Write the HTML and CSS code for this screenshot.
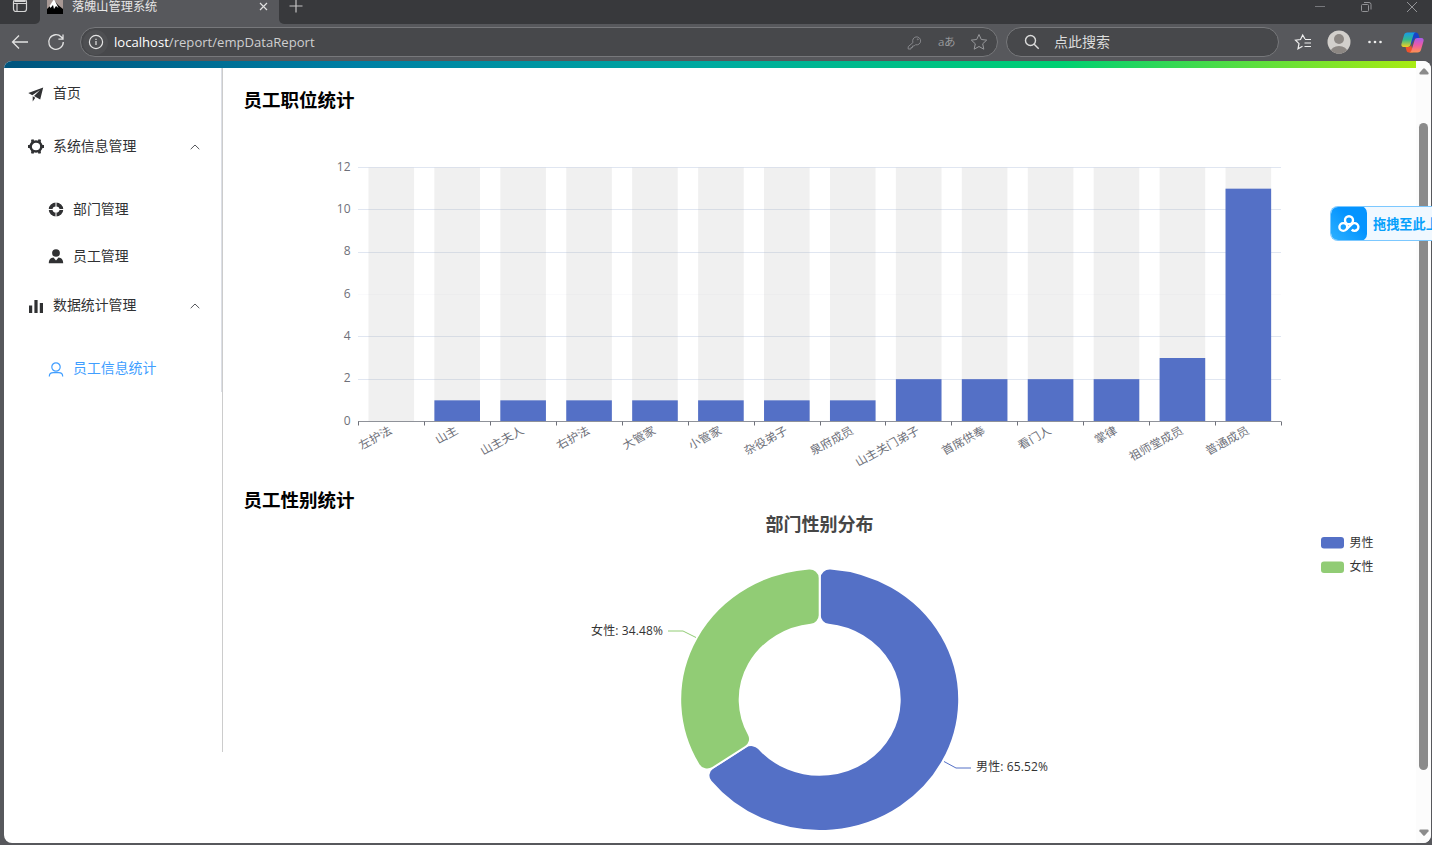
FILE: index.html
```html
<!DOCTYPE html>
<html lang="zh-CN">
<head>
    <meta charset="UTF-8">
    <meta name="viewport" content="width=device-width, initial-scale=1.0">
    <title>落魄山管理系统</title>
    <link rel="stylesheet" href="styles.css">
</head>
<body>
    <div class="tab-bar">
        <div class="tab-actions">
            <svg width="16" height="16" viewBox="0 0 16 16" fill="none" stroke="#d4d4d4" stroke-width="1.2"><rect x="1.5" y="1.5" width="13" height="12" rx="2.5"/><path d="M1.5 5.5h13M5 5.5v8"/><path d="M2.5 3h11" stroke-width="2"/></svg>
        </div>
        <div class="tab">
            <svg class="favicon" width="16" height="16" viewBox="0 0 16 16"><rect width="16" height="16" fill="#a79894"/><path d="M0 11l3-3 4-6 4 5 5 4v5H0z" fill="#000"/><path d="M7 1L2.500 8l1 2 2.500-3 1 4 2-3 2.500 2z" fill="#fff"/></svg>
            <span class="tab-title">落魄山管理系统</span>
            <svg class="tab-close" width="9" height="9" viewBox="0 0 9 9" stroke="#e0e0e0" stroke-width="1.2"><path d="M1 1l7 7M8 1L1 8"/></svg>
        </div>
        <div class="tab-rest">
            <svg width="14" height="14" viewBox="0 0 14 14" stroke="#c4c4c4" stroke-width="1.2"><path d="M7 .5v13M.5 7h13"/></svg>
            <div class="window-controls">
                <svg width="12" height="12" viewBox="0 0 12 12" stroke="#77787c"><path d="M1 5.500h10"/></svg>
                <svg width="12" height="12" viewBox="0 0 12 12" fill="none" stroke="#929396"><rect x="1.500" y="3.500" width="7" height="7" rx="1"/><path d="M4 1.500h5a2 2 0 0 1 2 2v5"/></svg>
                <svg width="12" height="12" viewBox="0 0 12 12" stroke="#929396"><path d="M1 1l10 10M11 1L1 11"/></svg>
            </div>
        </div>
    </div>

    <div class="toolbar">
        <svg class="back" width="18" height="16" viewBox="0 0 18 16" fill="none" stroke="#e2e2e2" stroke-width="1.3"><path d="M17 8H1.500M8 1.500L1.500 8 8 14.500"/></svg>
        <svg class="refresh" width="18" height="18" viewBox="0 0 18 18" fill="none" stroke="#e2e2e2" stroke-width="1.3"><path d="M16.300 9a7.300 7.300 0 1 1-2-5l1.700 1.800M16 1.500v4.600h-4.600"/></svg>
        <div class="address">
            <span class="info-badge"><svg width="16" height="16" viewBox="0 0 16 16" fill="none" stroke="#e4e4e4" stroke-width="1.2"><circle cx="8" cy="8" r="6.600"/><path d="M8 7v4M8 4.700v1.300"/></svg></span>
            <span class="url"><b>localhost</b>/report/empDataReport</span>
            <svg class="key" width="15" height="15" viewBox="0 0 15 15" fill="none" stroke="#85868a"><path d="M6 7.500a4 4 0 1 1 2.500 2.200L7.200 11H5.500v1.500H4V14H1.200v-2.300z"/><circle cx="10.800" cy="4.300" r=".5"/></svg>
            <span class="translate">aあ</span>
            <svg width="18" height="18" viewBox="0 0 18 18" fill="none" stroke="#98999c"><path d="M9 1.500l2.300 5 5.400.6-4 3.700 1.100 5.400L9 13.500l-4.800 2.700 1.100-5.400-4-3.700 5.400-.6z"/></svg>
        </div>
        <div class="search">
            <svg width="16" height="16" viewBox="0 0 16 16" fill="none" stroke="#dcdcdc" stroke-width="1.4"><circle cx="6.500" cy="6.500" r="5"/><path d="M10.200 10.200l4.500 4.500"/></svg>
            <span>点此搜索</span>
        </div>
        <svg class="favorites" width="18" height="18" viewBox="0 0 18 18" fill="none" stroke="#eee" stroke-width="1.2"><path d="M11 6L8.700 2 6.500 6.500l-5 .6L5 10.600 4 15.800l4.500-2.500M11 6.500h6M10.500 10H17M10.500 13.500H17"/></svg>
        <svg class="avatar" width="24" height="24" viewBox="0 0 24 24"><defs><clipPath id="face"><circle cx="12" cy="12" r="11.500"/></clipPath></defs><g clip-path="url(#face)"><rect width="24" height="24" fill="#d2cfcb"/><circle cx="12" cy="9" r="5" fill="#8c8783"/><ellipse cx="12" cy="22" rx="8.500" ry="6" fill="#8c8783"/></g></svg>
        <svg class="more" width="16" height="4" viewBox="0 0 16 4" fill="#eee"><circle cx="2.500" cy="2" r="1.300"/><circle cx="8" cy="2" r="1.300"/><circle cx="13.500" cy="2" r="1.300"/></svg>
        <svg class="copilot" width="23" height="21" viewBox="0 0 23 21">
            <defs>
                <linearGradient id="cp1" x1="0" y1="0" x2="0" y2="1"><stop offset="0" stop-color="#169bea"/><stop offset=".5" stop-color="#35b98b"/><stop offset="1" stop-color="#f5d020"/></linearGradient>
                <linearGradient id="cp2" x1="0" y1="0" x2="0" y2="1"><stop offset="0" stop-color="#a65bea"/><stop offset=".5" stop-color="#ee5ba5"/><stop offset="1" stop-color="#ff9350"/></linearGradient>
            </defs>
            <path d="M11 .5h4c1.500 0 2.200 1 2.600 2.300L18.500 6h-3c-1.500 0-2.300.8-2.700 2l-3 5z" fill="#1643c9"/>
            <path d="M12 20.500H8c-1.500 0-2.200-1-2.600-2.300L4.500 15h3c1.500 0 2.300-.8 2.700-2z" fill="#f0522c"/>
            <path d="M6.500.5H15c-1.500 0-2.100 1-2.600 2.500L9.500 12.500C9 14.200 8 15 6.500 15h-4C.7 15 0 13.500.5 11.800L3 3.200C3.500 1.500 4.500.5 6.500.5z" fill="url(#cp1)"/>
            <path d="M16.500 20.500H8c1.500 0 2.100-1 2.600-2.500l2.900-9.500C14 6.800 15 6 16.500 6h4c1.800 0 2.500 1.500 2 3.200L20 17.800c-.5 1.700-1.500 2.700-3.500 2.700z" fill="url(#cp2)"/>
        </svg>
    </div>

    <div class="page">
        <div class="page-body">
            <div class="header-strip"></div>
            <div class="layout">
                <aside class="sidebar">
                    <ul class="menu">
                        <li class="menu-item">
                            <svg width="16" height="15" viewBox="0 0 16 15" fill="#303133"><path d="M15.200 .5L.3 6l4 2.200L12 3 6 9l6.200 3.500zM4.700 9.300V14.500l2.600-3.700z"/></svg>
                            <span>首页</span>
                        </li>
                        <li class="menu-item">
                            <svg width="16" height="15" viewBox="0 0 16 15"><ellipse cx="8" cy="7.500" rx="5.400" ry="5" fill="none" stroke="#303133" stroke-width="2.600"/><path d="M3 .8l2.500-.5 1 2.700-3 1.500zM13 .8L10.500.3l-1 2.700 3 1.500zM3 14.200l2.500.5 1-2.700-3-1.500zM13 14.200l-2.500.5-1-2.700 3-1.500zM0 6h3v3H0zM13 6h3v3h-3z" fill="#303133"/></svg>
                            <span>系统信息管理</span>
                            <svg class="arrow" width="10" height="6" viewBox="0 0 10 6" fill="none" stroke="#55575b"><path d="M.7 5.200L5 1l4.300 4.200"/></svg>
                        </li>
                        <li>
                            <ul class="submenu">
                                <li class="menu-item">
                                    <svg width="16" height="15" viewBox="0 0 16 15"><ellipse cx="8" cy="7.500" rx="5.400" ry="5" fill="none" stroke="#303133" stroke-width="3.800"/><path d="M8 0v5M8 10v5M0 7.500h5M11 7.500h5" stroke="#fff"/></svg>
                                    <span>部门管理</span>
                                </li>
                                <li class="menu-item">
                                    <svg width="16" height="15" viewBox="0 0 16 15" fill="#303133"><ellipse cx="8" cy="4" rx="3.900" ry="3.800"/><path d="M.8 14.300c0-3.700 1.700-5.300 4.700-5.700L8 11.500l2.500-2.900c3 .4 4.700 2 4.700 5.700z"/></svg>
                                    <span>员工管理</span>
                                </li>
                            </ul>
                        </li>
                        <li class="menu-item">
                            <svg width="16" height="15" viewBox="0 0 16 15" fill="#303133"><path d="M1 6.500h3.200V14H1zM6.400 1h3.200v13H6.400zM11.800 4H15v10h-3.200z"/></svg>
                            <span>数据统计管理</span>
                            <svg class="arrow" width="10" height="6" viewBox="0 0 10 6" fill="none" stroke="#55575b"><path d="M.7 5.200L5 1l4.300 4.200"/></svg>
                        </li>
                        <li>
                            <ul class="submenu">
                                <li class="menu-item active">
                                    <svg width="16" height="15" viewBox="0 0 16 15" fill="none" stroke="#409eff" stroke-width="1.2"><ellipse cx="8" cy="5" rx="4.200" ry="4.200"/><path d="M1.300 14.500c0-2.800 1.500-3.800 4-3.800h5.400c2.500 0 4 1 4 3.800"/></svg>
                                    <span>员工信息统计</span>
                                </li>
                            </ul>
                        </li>
                    </ul>
                </aside>
                <main class="content">
                    <h3>员工职位统计</h3>
                    <svg id="job-chart" width="1172" height="376"></svg>
                    <h3>员工性别统计</h3>
                    <svg id="gender-chart" width="1172" height="331"></svg>
                </main>
            </div>
        </div>
        <div class="scrollbar">
            <svg width="10" height="7" viewBox="0 0 10 7" fill="#8b8b8b"><path d="M4 .8q1-1 2 0l3.500 4q.6 1.700-1 1.700h-7q-1.600 0-1-1.700z"/></svg>
            <div class="thumb"></div>
            <svg width="10" height="7" viewBox="0 0 10 7" fill="#8b8b8b"><path d="M4 6.200q1 1 2 0l3.500-4q.6-1.700-1-1.700h-7q-1.600 0-1 1.700z"/></svg>
        </div>
    </div>

    <div class="upload-float">
        <div class="upload-icon">
            <svg width="22" height="18" viewBox="0 0 22 18" fill="none" stroke="#fff" stroke-width="2.4"><circle cx="11" cy="5.300" r="4"/><circle cx="5.300" cy="12" r="3.900"/><path d="M8.300 14.500l5.200-5a3.900 3.900 0 1 1 .2 5.200"/></svg>
        </div>
        <span>拖拽至此上</span>
    </div>

    <script>
        const SVG_NS = 'http://www.w3.org/2000/svg';

        const jobList = ['左护法', '山主', '山主夫人', '右护法', '大管家', '小管家', '杂役弟子', '泉府成员', '山主关门弟子', '首席供奉', '看门人', '掌律', '祖师堂成员', '普通成员'];
        const dataList = [0, 1, 1, 1, 1, 1, 1, 1, 2, 2, 2, 2, 3, 11];
        const genderData = [
            { name: '男性', value: 19, color: '#5470c6' },
            { name: '女性', value: 10, color: '#91cc75' }
        ];

        function add(parent, tag, attrs, text) {
            const el = document.createElementNS(SVG_NS, tag);
            for (const key in attrs) {
                el.setAttribute(key, attrs[key]);
            }
            if (text) {
                el.textContent = text;
            }
            parent.appendChild(el);
            return el;
        }

        function drawJobChart() {
            const svg = document.getElementById('job-chart');
            const left = 114, right = 1037, top = 55.5, bottom = 309.5, max = 12;
            const band = (right - left) / jobList.length;
            const barWidth = 45.6;
            const toY = value => bottom - (bottom - top) * value / max;

            for (let v = 0; v <= max; v += 2) {
                const y = Math.floor(toY(v)) + 0.5;
                if (v > 0) {
                    add(svg, 'line', { x1: left, x2: right, y1: y, y2: y, stroke: v === 6 ? '#fafafc' : '#e0e6f1' });
                }
                add(svg, 'text', { x: left - 7.5, y: toY(v) + 3.3, class: 'axis-label', 'text-anchor': 'end' }, String(v));
            }

            jobList.forEach((name, i) => {
                const center = left + band * (i + 0.5);
                const x = center - barWidth / 2 + 0.3;
                const y = toY(dataList[i]);
                add(svg, 'rect', { x: x, y: top, width: barWidth, height: bottom - top, fill: 'rgba(180, 180, 180, 0.2)' });
                add(svg, 'rect', { x: x, y: y, width: barWidth, height: bottom - y, fill: '#5470c6' });
                add(svg, 'text', {
                    class: 'axis-label',
                    'text-anchor': 'end',
                    transform: `translate(${center + 2} ${bottom + 11.3}) scale(1 0.94) rotate(-30)`
                }, name);
            });

            add(svg, 'line', { x1: left, x2: right, y1: bottom, y2: bottom, stroke: '#8f9299' });
            for (let i = 0; i <= jobList.length; i++) {
                const x = Math.round(left + band * i) + 0.5;
                add(svg, 'line', { x1: x, x2: x, y1: bottom, y2: bottom + 4, stroke: '#6e7079' });
            }
        }

        // ring sector from angle a0 to a1, corners rounded by c
        function ringPath(a0, a1, R, r, c) {
            const p = (d, a) => `${d * Math.sin(a)} ${-d * Math.cos(a)}`;
            const dOut = Math.asin(c / (R - c)), dIn = Math.asin(c / (r + c));
            const eOut = Math.sqrt((R - c) ** 2 - c * c), eIn = Math.sqrt((r + c) ** 2 - c * c);
            const large = a1 - a0 > Math.PI ? 1 : 0;
            return `M${p(eOut, a0)} A${c} ${c} 0 0 1 ${p(R, a0 + dOut)} A${R} ${R} 0 ${large} 1 ${p(R, a1 - dOut)}`
                + ` A${c} ${c} 0 0 1 ${p(eOut, a1)} L${p(eIn, a1)} A${c} ${c} 0 0 1 ${p(r, a1 - dIn)}`
                + ` A${r} ${r} 0 ${large} 0 ${p(r, a0 + dIn)} A${c} ${c} 0 0 1 ${p(eIn, a0)} Z`;
        }

        function drawGenderChart() {
            const svg = document.getElementById('gender-chart');
            add(svg, 'text', { x: 575.5, y: 18.5, class: 'chart-title', 'text-anchor': 'middle' }, '部门性别分布');

            const ring = add(svg, 'g', { transform: 'translate(575.7 187.5) scale(1 0.942)' });
            const total = genderData.reduce((sum, item) => sum + item.value, 0);
            let angle = 0;
            genderData.forEach((item, i) => {
                const next = angle + item.value / total * Math.PI * 2;
                add(ring, 'path', { d: ringPath(angle, next, 139.5, 80, 10), fill: item.color, stroke: '#fff', 'stroke-width': 2 });
                angle = next;

                const y = 25 + i * 24.5;
                add(svg, 'rect', { x: 1077, y: y, width: 23, height: 11.5, rx: 3, fill: item.color });
                add(svg, 'text', { x: 1105.5, y: y + 9.5, class: 'chart-label' }, item.name);
            });

            const percent = item => `${item.name}: ${(item.value / total * 100).toFixed(2)}%`;
            add(svg, 'path', { d: 'M700 249.5L712 256h15', fill: 'none', stroke: '#5470c6' });
            add(svg, 'text', { x: 732, y: 259, class: 'chart-label', textLength: 72 }, percent(genderData[0]));
            add(svg, 'path', { d: 'M452 125.5L439 119h-15', fill: 'none', stroke: '#91cc75' });
            add(svg, 'text', { x: 347, y: 122.5, class: 'chart-label', textLength: 72 }, percent(genderData[1]));
        }

        drawJobChart();
        drawGenderChart();
    </script>
</body>
</html>
```
FILE: styles.css
```css
* {
    box-sizing: border-box;
}

body {
    margin: 0;
    width: 1432px;
    height: 845px;
    overflow: hidden;
    background-color: #57585c;
    font-family: "Open Sans", "Noto Sans CJK SC", sans-serif;
    font-size: 14px;
    color: #303133;
}

ul {
    list-style: none;
    margin: 0;
    padding: 0;
}

svg {
    display: block;
    flex-shrink: 0;
}

/* browser tabs */
.tab-bar {
    display: flex;
    height: 24px;
}

.tab-actions {
    width: 40px;
    padding: 0 0 12px 12px;
    display: flex;
    align-items: center;
    background-color: #38393c;
    border-bottom-right-radius: 5px;
}

.tab {
    width: 239px;
    padding: 0 11px 11px 7px;
    display: flex;
    align-items: center;
}

.favicon {
    margin-top: -2px;
}

.tab-title {
    margin-left: 9px;
    font-size: 12.2px;
    line-height: 13px;
    color: #e6e6e6;
}

.tab-close {
    margin-left: auto;
}

.tab-rest {
    flex: 1;
    padding: 0 14px 12px 10px;
    display: flex;
    align-items: center;
    justify-content: space-between;
    background-color: #38393c;
    border-bottom-left-radius: 5px;
}

.window-controls {
    display: flex;
    gap: 34px;
    margin-top: 2px;
}

/* browser toolbar */
.toolbar {
    display: flex;
    align-items: center;
    height: 37px;
    padding: 0 0 1px 11px;
}

.refresh {
    margin-left: 18px;
}

.address,
.search {
    display: flex;
    align-items: center;
    height: 30px;
    border: 1px solid #77787b;
    border-radius: 15px;
    background-color: #47484b;
}

.address {
    width: 918px;
    margin-left: 15px;
    padding: 0 9px 0 2px;
}

.info-badge {
    display: flex;
    align-items: center;
    justify-content: center;
    width: 25px;
    height: 25px;
    border-radius: 50%;
    background-color: #4e4f52;
}

.url {
    flex: 1;
    margin-left: 6px;
    font-size: 13.1px;
    color: #cfcfd0;
}

.url b {
    font-weight: normal;
    color: #fff;
}

.translate {
    margin: 0 14px 2px 16px;
    width: 18px;
    font-size: 11.5px;
    letter-spacing: -0.5px;
    white-space: nowrap;
    color: #98999c;
}

.search {
    width: 273px;
    margin-left: 8px;
    padding-left: 17px;
    color: #dcdcdc;
}

.search span {
    margin: 0 0 2px 14px;
}

.favorites {
    margin-left: 15px;
}

.avatar {
    margin-left: 15px;
}

.more {
    margin-left: 16px;
}

.copilot {
    margin-left: 18px;
}

/* page */
.page {
    display: flex;
    width: 1427px;
    height: 782px;
    margin-left: 4px;
    border-radius: 8px;
    overflow: hidden;
    background-color: #fff;
}

.page-body {
    width: 1412px;
}

.header-strip {
    height: 7px;
    background-image: linear-gradient(to right, #00547d, #007fa4, #00aaa0, #00d072, #a8eb12);
}

.layout {
    display: flex;
}

.sidebar {
    width: 219px;
    height: 684px;
    border-right: 1px solid #ccc;
}

.menu {
    height: 324px;
    border-right: 1px solid #dcdfe6;
}

.menu-item {
    display: flex;
    align-items: center;
    height: 52.5px;
    padding: 0 21px 0 24px;
}

.menu-item span {
    margin: 0 0 2px 9px;
    line-height: 20px;
    font-size: 13.9px;
}

.arrow {
    margin-left: auto;
}

.submenu {
    padding-top: 13px;
}

.submenu .menu-item {
    height: 47px;
    padding-left: 44px;
}

.menu-item.active {
    color: #409eff;
}

.content {
    flex: 1;
    padding: 20px 0 0 20.5px;
}

h3 {
    margin: 0;
    font-size: 18.5px;
    line-height: 24px;
    color: #000;
}

.axis-label {
    font-size: 12px;
    fill: #6e7079;
}

.chart-title {
    font-size: 18px;
    font-weight: bold;
    fill: #464646;
}

.chart-label {
    font-size: 12px;
    fill: #333;
}

.scrollbar {
    display: flex;
    flex-direction: column;
    align-items: center;
    width: 15px;
    padding: 7px 0;
    background-color: #fcfcfc;
}

.thumb {
    width: 9px;
    height: 647px;
    margin: 48px 0 auto;
    border-radius: 5px;
    background-color: #8b8b8b;
}

/* floating upload button */
.upload-float {
    position: absolute;
    top: 206px;
    left: 1330px;
    width: 102px;
    height: 35px;
    display: flex;
    align-items: center;
    overflow: hidden;
    border: 1px solid #7cc8ff;
    border-right: none;
    border-radius: 8px 0 0 8px;
    background-color: #f0f8ff;
    font-size: 13.2px;
    font-weight: bold;
    color: #06a0fb;
    white-space: nowrap;
}

.upload-icon {
    display: flex;
    align-items: center;
    justify-content: center;
    flex-shrink: 0;
    width: 36px;
    height: 35px;
    margin-right: 6px;
    border-radius: 7px;
    background-image: linear-gradient(45deg, #2fb2ff, #0594ff 60%);
}
```
